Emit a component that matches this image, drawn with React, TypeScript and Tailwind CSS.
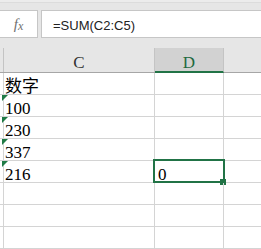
const serif = { fontFamily: '"Liberation Serif", "Noto Sans CJK SC", serif' }

const rows = [
  { c: '数字', mark: false, d: '' },
  { c: '100', mark: true, d: '' },
  { c: '230', mark: true, d: '' },
  { c: '337', mark: true, d: '' },
  { c: '216', mark: true, d: '0', selected: true },
  { c: '', mark: false, d: '' },
  { c: '', mark: false, d: '' },
  { c: '', mark: false, d: '' },
]

export default function App() {
  return (
    <div className="w-[261px] h-[249px] overflow-hidden bg-[#e6e6e6]">
      {/* top strip */}
      <div className="h-[3px] bg-[#ececec] border-b border-[#dcdcdc]" />
      <div className="h-[7px]" />

      {/* formula bar */}
      <div className="flex h-[28px] gap-[3px]">
        <div className="-ml-px w-[39px] bg-white border border-[#c6c6c6] flex items-center justify-center">
          <span className="italic text-[#707070] text-[15px] leading-none" style={serif}>
            f<span className="text-[12px] relative top-[1px]">x</span>
          </span>
        </div>
        <div className="flex-1 -mr-px bg-white border border-[#c6c6c6] flex items-center pl-[11px]">
          <span
            className="text-[13px] text-[#222] leading-none relative top-[1px]"
            style={{ fontFamily: '"Liberation Sans", Arial, sans-serif' }}
          >
            =SUM(C2:C5)
          </span>
        </div>
      </div>
      <div className="h-[10px]" />

      {/* column headers */}
      <div className="flex h-[25px] border-b border-[#a6a6a6] text-[17px]" style={serif}>
        <div className="w-[4px] h-[24px] border-r border-[#c4c4c4]" />
        <div className="w-[151px] h-[24px] border-r border-[#c4c4c4] text-center pt-[7px] leading-[15px] text-[#333]">
          C
        </div>
        <div className="w-[69px] h-[25px] border-r border-[#c4c4c4] border-b-2 border-b-[#217346] bg-[#d2d2d2] text-center pt-[7px] leading-[15px] text-[#1e6a40]">
          D
        </div>
        <div className="flex-1" />
      </div>

      {/* grid */}
      <div className="bg-white text-[17px] text-black" style={serif}>
        {rows.map((r, i) => (
          <div key={i} className="flex h-[22px] border-b border-[#d4d4d4]">
            <div className="w-[4px] border-r border-[#d4d4d4]" />
            <div className="relative w-[151px] border-r border-[#d4d4d4] pl-[1px] pt-[6px] leading-[15px] whitespace-nowrap">
              {r.mark && (
                <div className="absolute -left-[2px] top-0 w-[6px] h-[6px] bg-[#1f7a45] [clip-path:polygon(0_0,100%_0,0_100%)]" />
              )}
              {r.c}
            </div>
            <div className="relative w-[69px] border-r border-[#d4d4d4] pl-[3px] pt-[6px] leading-[15px]">
              {r.d}
              {r.selected && (
                <>
                  <div className="absolute -left-[2px] -top-[2px] w-[72px] h-[24px] border-2 border-[#217346]" />
                  <div className="absolute left-[65px] top-[18px] w-[6px] h-[6px] bg-[#217346]" />
                </>
              )}
            </div>
            <div className="flex-1" />
          </div>
        ))}
      </div>
    </div>
  )
}
